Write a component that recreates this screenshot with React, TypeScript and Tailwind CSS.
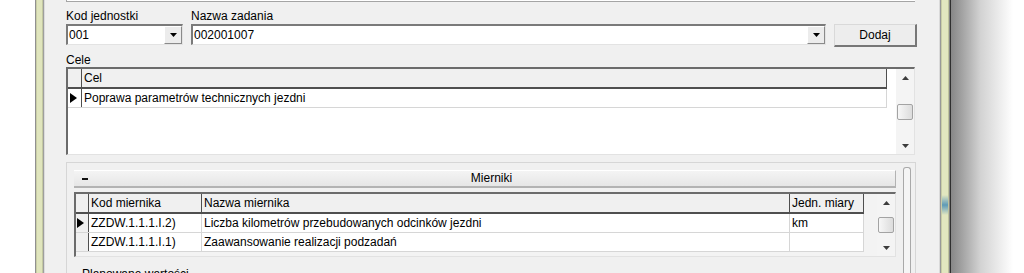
import React from "react";

function DropArrow() {
  return (
    <svg width="7" height="4" viewBox="0 0 7 4">
      <path d="M0 0h7L3.5 4z" fill="#000" />
    </svg>
  );
}

function ScrollUp() {
  return (
    <svg width="7" height="4" viewBox="0 0 7 4">
      <path d="M0 4h7L3.5 0z" fill="#3c3c3c" />
    </svg>
  );
}

function ScrollDown() {
  return (
    <svg width="7" height="4" viewBox="0 0 7 4">
      <path d="M0 0h7L3.5 4z" fill="#3c3c3c" />
    </svg>
  );
}

function RowPointer() {
  return (
    <svg width="7" height="10" viewBox="0 0 7 10">
      <path d="M0 0L7 5L0 10z" fill="#000" />
    </svg>
  );
}

function Combo({ value, className }: { value: string; className: string }) {
  return (
    <div className={`flex h-[21px] bg-white border-t-2 border-l-2 border-r border-b border-t-[#7a7a7a] border-l-[#7a7a7a] border-r-[#e3e3e3] border-b-[#e3e3e3] ${className}`}>
      <div className="flex-1 pl-[1px] leading-[18px]">{value}</div>
      <div className="w-[18px] flex items-center justify-center bg-[#ececec] border-t border-l border-t-white border-l-white border-r border-b border-r-[#8a8a8a] border-b-[#8a8a8a]">
        <DropArrow />
      </div>
    </div>
  );
}

function VScroll({ thumbTop }: { thumbTop: string }) {
  return (
    <div className="w-[18px] flex flex-col bg-[#f4f4f4]">
      <div className="h-[17px] shrink-0 flex items-center justify-center">
        <ScrollUp />
      </div>
      <div className={`${thumbTop} h-[16px] w-[16px] shrink-0 mx-auto rounded-[2px] border border-[#a3a3a3] bg-gradient-to-r from-[#f7f7f7] to-[#dcdcdc]`} />
      <div className="flex-1" />
      <div className="h-[17px] shrink-0 flex items-center justify-center">
        <ScrollDown />
      </div>
    </div>
  );
}

const celeRows = [{ cel: "Poprawa parametrów technicznych jezdni", current: true }];

const miernikiRows = [
  { kod: "ZZDW.1.1.1.I.2)", nazwa: "Liczba kilometrów przebudowanych odcinków jezdni", jm: "km", current: true },
  { kod: "ZZDW.1.1.1.I.1)", nazwa: "Zaawansowanie realizacji podzadań", jm: "", current: false },
];

function CeleGrid() {
  return (
    <div className="w-[849px] h-[88px] shrink-0 flex bg-white border-t-2 border-l-2 border-t-[#6b6b6b] border-l-[#6b6b6b] border-r border-b border-r-[#e2e2e2] border-b-[#e2e2e2]">
      <div className="w-[828px] flex flex-col">
        <div className="w-[819px] h-[20px] shrink-0 flex bg-[#f0f0f0] border-b-2 border-[#4f4f4f]">
          <div className="w-[14px] border-r border-[#4f4f4f]" />
          <div className="flex-1 pl-[2px] leading-[18px] border-r border-[#4f4f4f]">Cel</div>
        </div>
        {celeRows.map((r) => (
          <div key={r.cel} className="w-[819px] h-[19px] shrink-0 flex border-b border-[#d6d6d6]">
            <div className="w-[14px] flex items-center pl-[2px] border-r border-[#4f4f4f]">
              {r.current && <RowPointer />}
            </div>
            <div className="flex-1 pl-[2px] leading-[18px] border-r border-[#d6d6d6]">{r.cel}</div>
          </div>
        ))}
      </div>
      <VScroll thumbTop="mt-[18px]" />
    </div>
  );
}

function MiernikiGrid() {
  return (
    <div className="w-[822px] h-[65px] shrink-0 flex bg-[#f3f3f3] border-t-2 border-l-2 border-t-[#6b6b6b] border-l-[#6b6b6b] border-r border-b border-r-[#e2e2e2] border-b-[#e2e2e2]">
      <div className="w-[801px] flex flex-col">
        <div className="w-[788px] h-[20px] shrink-0 flex bg-[#f0f0f0] border-b-2 border-[#4f4f4f]">
          <div className="w-[13px] border-r border-[#4f4f4f]" />
          <div className="w-[113px] pl-[2px] leading-[18px] border-r border-[#4f4f4f]">Kod miernika</div>
          <div className="w-[588px] pl-[2px] leading-[18px] border-r border-[#4f4f4f]">Nazwa miernika</div>
          <div className="w-[74px] pl-[2px] leading-[18px] border-r border-[#4f4f4f]">Jedn. miary</div>
        </div>
        {miernikiRows.map((r) => (
          <div key={r.kod} className="w-[788px] h-[19px] shrink-0 flex bg-white border-b border-[#d6d6d6]">
            <div className="w-[13px] flex items-center pl-[1px] bg-[#f0f0f0] border-r border-[#4f4f4f]">
              {r.current && <RowPointer />}
            </div>
            <div className="w-[113px] pl-[2px] leading-[18px] border-r border-[#d6d6d6]">{r.kod}</div>
            <div className="w-[588px] pl-[2px] leading-[18px] border-r border-[#d6d6d6]">{r.nazwa}</div>
            <div className="w-[74px] pl-[2px] leading-[18px] border-r border-[#d6d6d6]">{r.jm}</div>
          </div>
        ))}
      </div>
      <VScroll thumbTop="mt-[6px]" />
    </div>
  );
}

export default function App() {
  return (
    <div className="w-[1024px] h-[273px] overflow-hidden bg-white flex font-['Liberation_Sans',Arial,sans-serif] text-[12px] leading-[14px] text-black">
      <div className="w-[35px] shrink-0" />

      {/* left window border */}
      <div className="flex shrink-0">
        <div className="w-px bg-[#909090]" />
        <div className="w-px bg-[#c9cea6]" />
        <div className="w-[5px] bg-[#e0e5bd]" />
        <div className="w-px bg-[#c3c8a2]" />
        <div className="w-px bg-[#9e9e9e]" />
        <div className="w-px bg-[#dcdcdc]" />
      </div>

      <main className="w-[894px] h-[273px] shrink-0 overflow-hidden bg-[#f0f0f0] pl-[21px] flex flex-col">
        <div className="w-[849px] h-[2px] shrink-0 bg-white border-l border-b border-[#a5a5a5]" />

        <div className="mt-[7px] flex h-[14px] shrink-0">
          <span className="w-[125px]">Kod jednostki</span>
          <span>Nazwa zadania</span>
        </div>

        <div className="mt-[1px] flex items-start gap-[8px] shrink-0">
          <Combo value="001" className="w-[117px]" />
          <Combo value="002001007" className="w-[635px]" />
          <button className="w-[83px] h-[23px] bg-[#ededed] border-t border-l border-t-[#d9d9d9] border-l-[#d9d9d9] border-b-2 border-r-2 border-b-[#777777] border-r-[#777777] leading-[18px] text-center">
            Dodaj
          </button>
        </div>

        <div className="mt-[6px] h-[14px] shrink-0">Cele</div>
        <CeleGrid />

        {/* Mierniki panel */}
        <div className="mt-[7px] w-[850px] h-[120px] shrink-0 flex border-t border-l border-r border-[#d6d6d6] pl-[7px] pt-[7px]">
          <div className="w-[822px] flex flex-col">
            <div className="h-[18px] shrink-0 flex bg-gradient-to-b from-[#f4f4f4] to-[#e6e6e6] border-t border-t-white border-b-2 border-b-[#b3b3b3] border-r border-r-[#b3b3b3]">
              <div className="w-[14px] flex items-center">
                <div className="ml-[8px] w-[6px] h-[2px] bg-[#111]" />
              </div>
              <div className="flex-1 text-center leading-[15px]">Mierniki</div>
            </div>
            <div className="mt-[4px] shrink-0">
              <MiernikiGrid />
            </div>
            <div className="mt-[10px] pl-[8px] leading-[14px] shrink-0">Planowane wartości</div>
          </div>
          <div className="ml-[7px] mt-[-3px] w-[8px] rounded-t-[3px] border border-b-0 border-[#a9a9a9] bg-[#f5f5f5]" />
        </div>
      </main>

      {/* right window border */}
      <div className="flex shrink-0">
        <div className="w-px bg-[#dadada]" />
        <div className="w-px bg-[#989898]" />
        <div className="w-px bg-[#c8cca6]" />
        <div className="w-[6px] flex flex-col bg-[#e2e6bf]">
          <div className="h-[195px]" />
          <div className="h-[20px] bg-gradient-to-b from-[#e2e6bf] via-[#5d9ab6] to-[#e2e6bf]" />
        </div>
        <div className="w-px bg-[#bec29c]" />
        <div className="w-px bg-[#858585]" />
        <div className="w-px bg-[#2f2f2f]" />
      </div>

      <div className="flex-1 bg-gradient-to-r from-[#878787] via-[#d2d2d2] via-40% to-white to-85%" />
    </div>
  );
}
